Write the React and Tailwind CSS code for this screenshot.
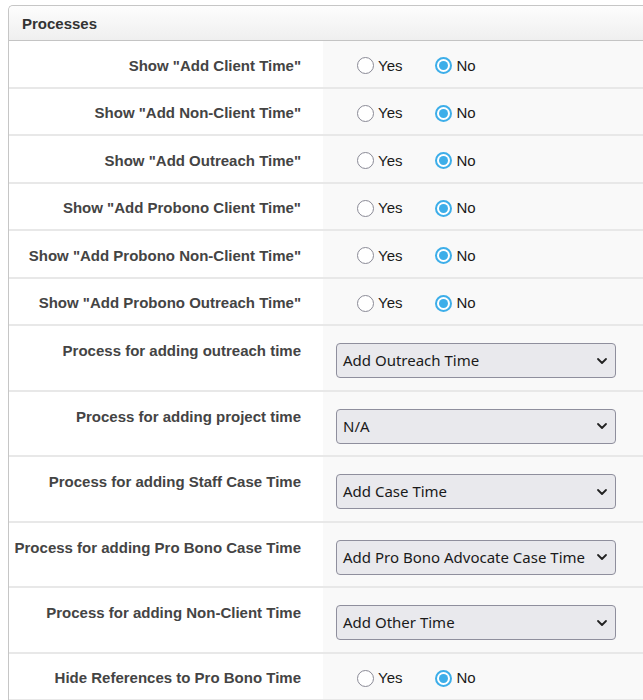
import React from "react";

const radioRows = [
  'Show "Add Client Time"',
  'Show "Add Non-Client Time"',
  'Show "Add Outreach Time"',
  'Show "Add Probono Client Time"',
  'Show "Add Probono Non-Client Time"',
  'Show "Add Probono Outreach Time"',
];

const selectRows = [
  ["Process for adding outreach time", "Add Outreach Time"],
  ["Process for adding project time", "N/A"],
  ["Process for adding Staff Case Time", "Add Case Time"],
  ["Process for adding Pro Bono Case Time", "Add Pro Bono Advocate Case Time"],
  ["Process for adding Non-Client Time", "Add Other Time"],
];

function Radio({ checked, label }) {
  return (
    <span className="flex items-center">
      {checked ? (
        <span className="w-[17px] h-[17px] rounded-full border-[2px] border-[#3daee9] bg-white flex items-center justify-center">
          <span className="w-[9px] h-[9px] rounded-full bg-[#3daee9]" />
        </span>
      ) : (
        <span className="w-[17px] h-[17px] rounded-full border border-[#8a8a96] bg-white" />
      )}
      <span className="ml-[4px] text-[15px] text-[#1a1a1a]">{label}</span>
    </span>
  );
}

function RadioPair() {
  return (
    <div className="flex items-center pl-[34px]">
      <Radio checked={false} label="Yes" />
      <span className="w-[33px]" />
      <Radio checked={true} label="No" />
    </div>
  );
}

function RadioRow({ label }) {
  return (
    <div className="flex h-[47.5px] border-b-2 border-[#e8e8e8]">
      <div className="w-[314px] bg-white flex items-center justify-end pr-[22px] pt-[4px] text-[15px] font-bold text-[#444]">
        {label}
      </div>
      <div className="flex-1 bg-[#f9f9f9] flex items-center pt-[4px]">
        <RadioPair />
      </div>
    </div>
  );
}

function SelectRow({ label, value }) {
  return (
    <div className="flex h-[65.5px] border-b-2 border-[#e8e8e8]">
      <div className="w-[314px] bg-white flex justify-end pr-[22px] pt-[16px] leading-[18px] text-[15px] font-bold text-[#444] whitespace-nowrap">
        {label}
      </div>
      <div className="flex-1 bg-[#f9f9f9] pl-[13px] pt-[17px]">
        <div className="w-[280px] h-[35px] rounded-[4px] border border-[#8f8f9d] bg-[#e9e9ed] flex items-center justify-between pl-[6px] pr-[6px]" style={{ fontFamily: '"Noto Sans", "Open Sans", sans-serif' }}>
          <span className="text-[15px] text-[#1a1a1a]">{value}</span>
          <svg width="12" height="8" viewBox="0 0 12 8" className="mr-[1px]">
            <path d="M2 2 L6 6 L10 2" fill="none" stroke="#222" strokeWidth="1.8" strokeLinecap="round" strokeLinejoin="round" />
          </svg>
        </div>
      </div>
    </div>
  );
}

export default function App() {
  return (
    <div className="w-[643px] h-[700px] overflow-hidden bg-white" style={{ fontFamily: '"Liberation Sans", Arial, sans-serif' }}>
      <div className="ml-[8px] mt-[5px] w-[700px] border-l border-t border-[#c6c6c6] rounded-tl-[5px]">
        <div className="h-[35px] flex items-center pl-[13px] pt-[3px] bg-gradient-to-b from-[#fdfdfd] to-[#efefef] border-b border-[#c4c4c4] rounded-tl-[5px]">
          <span className="text-[15px] font-bold text-[#333]">Processes</span>
        </div>
        {radioRows.map((l) => (
          <RadioRow key={l} label={l} />
        ))}
        {selectRows.map(([l, v]) => (
          <SelectRow key={l} label={l} value={v} />
        ))}
        <RadioRow label="Hide References to Pro Bono Time" />
      </div>
    </div>
  );
}
